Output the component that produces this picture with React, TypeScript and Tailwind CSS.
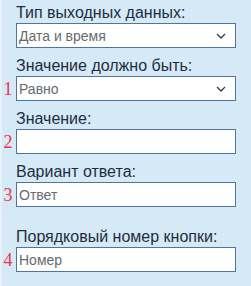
import { ReactNode } from "react";

function Chevron() {
	return (
		<svg width="10" height="6" viewBox="0 0 10 6" className="shrink-0">
			<polyline
				points="1,1 5,5 9,1"
				fill="none"
				stroke="#2d3b4b"
				strokeWidth="1.3"
			/>
		</svg>
	);
}

function Field({
	label,
	num,
	children,
	className = ""
}: {
	label: string;
	num?: string;
	children: ReactNode;
	className?: string;
}) {
	return (
		<div className={"grid grid-cols-[16px_220px] " + className}>
			<div />
			<div className="text-[16px] leading-[18px] text-[#1d2e42] mb-px">
				{label}
			</div>
			<div className="flex items-center justify-center font-['Liberation_Serif',serif] text-[18px] leading-none text-[#e8364c] pt-px">
				{num}
			</div>
			{children}
		</div>
	);
}

function Box({
	text,
	select = false
}: {
	text?: string;
	select?: boolean;
}) {
	return (
		<div className="h-[25px] bg-white border border-[#4a76a1] flex items-center pl-[2px] pr-[9px]">
			<span className="flex-1 text-[14px] text-[#666a70] leading-none">
				{text}
			</span>
			{select && <Chevron />}
		</div>
	);
}

export default function App() {
	return (
		<div className="w-[251px] h-[286px] bg-[#d6e9f6] border-l-2 border-[#e6f1f9] pt-1 font-['Liberation_Sans',Arial,sans-serif] box-border">
			<div className="-ml-[2px] flex flex-col gap-[9px]">
				<Field label="Тип выходных данных:">
					<Box text="Дата и время" select />
				</Field>
				<Field label="Значение должно быть:" num="1">
					<Box text="Равно" select />
				</Field>
				<Field label="Значение:" num="2">
					<Box />
				</Field>
				<Field label="Вариант ответа:" num="3">
					<Box text="Ответ" />
				</Field>
				<Field label="Порядковый номер кнопки:" num="4" className="mt-[12px]">
					<Box text="Номер" />
				</Field>
			</div>
		</div>
	);
}
